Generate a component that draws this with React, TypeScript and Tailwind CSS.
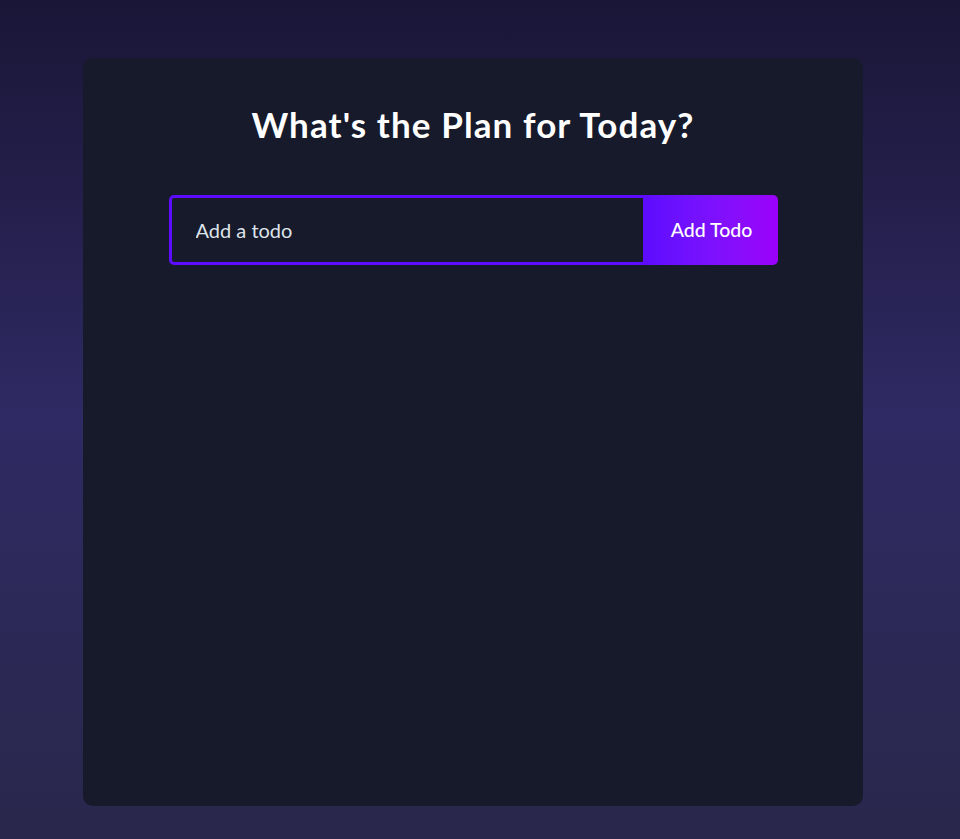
import { useState } from 'react'

export default function App() {
  const [text, setText] = useState('')

  return (
    <div className="min-h-screen w-full bg-gradient-to-b from-[#1a1637] via-[#2f2a63] to-[#29274b] pt-[58px] pb-[33px] font-['Lato',sans-serif]">
      <div className="ml-[83px] flex h-[748px] w-[780px] flex-col items-center rounded-[10px] bg-[#161a2b] pt-[49px]">
        <h1 className="text-[35px] leading-none font-bold tracking-[1.1px] text-white">
          What's the Plan for Today?
        </h1>

        <form className="mt-[53px] flex h-[70px] w-[609px]" onSubmit={e => e.preventDefault()}>
          <input
            autoFocus
            value={text}
            onChange={e => setText(e.target.value)}
            placeholder="Add a todo"
            className="h-full flex-1 rounded-l-[5px] border-[3px] border-[#5d0cff] bg-transparent pl-6 text-[20px] text-white outline-none placeholder:text-[#dde3ea]"
          />
          <button
            type="submit"
            className="h-full w-[132px] rounded-r-[5px] bg-gradient-to-r from-[#5d0cff] to-[#9b00fa] text-[19.5px] font-medium text-white"
          >
            Add Todo
          </button>
        </form>
      </div>
    </div>
  )
}
